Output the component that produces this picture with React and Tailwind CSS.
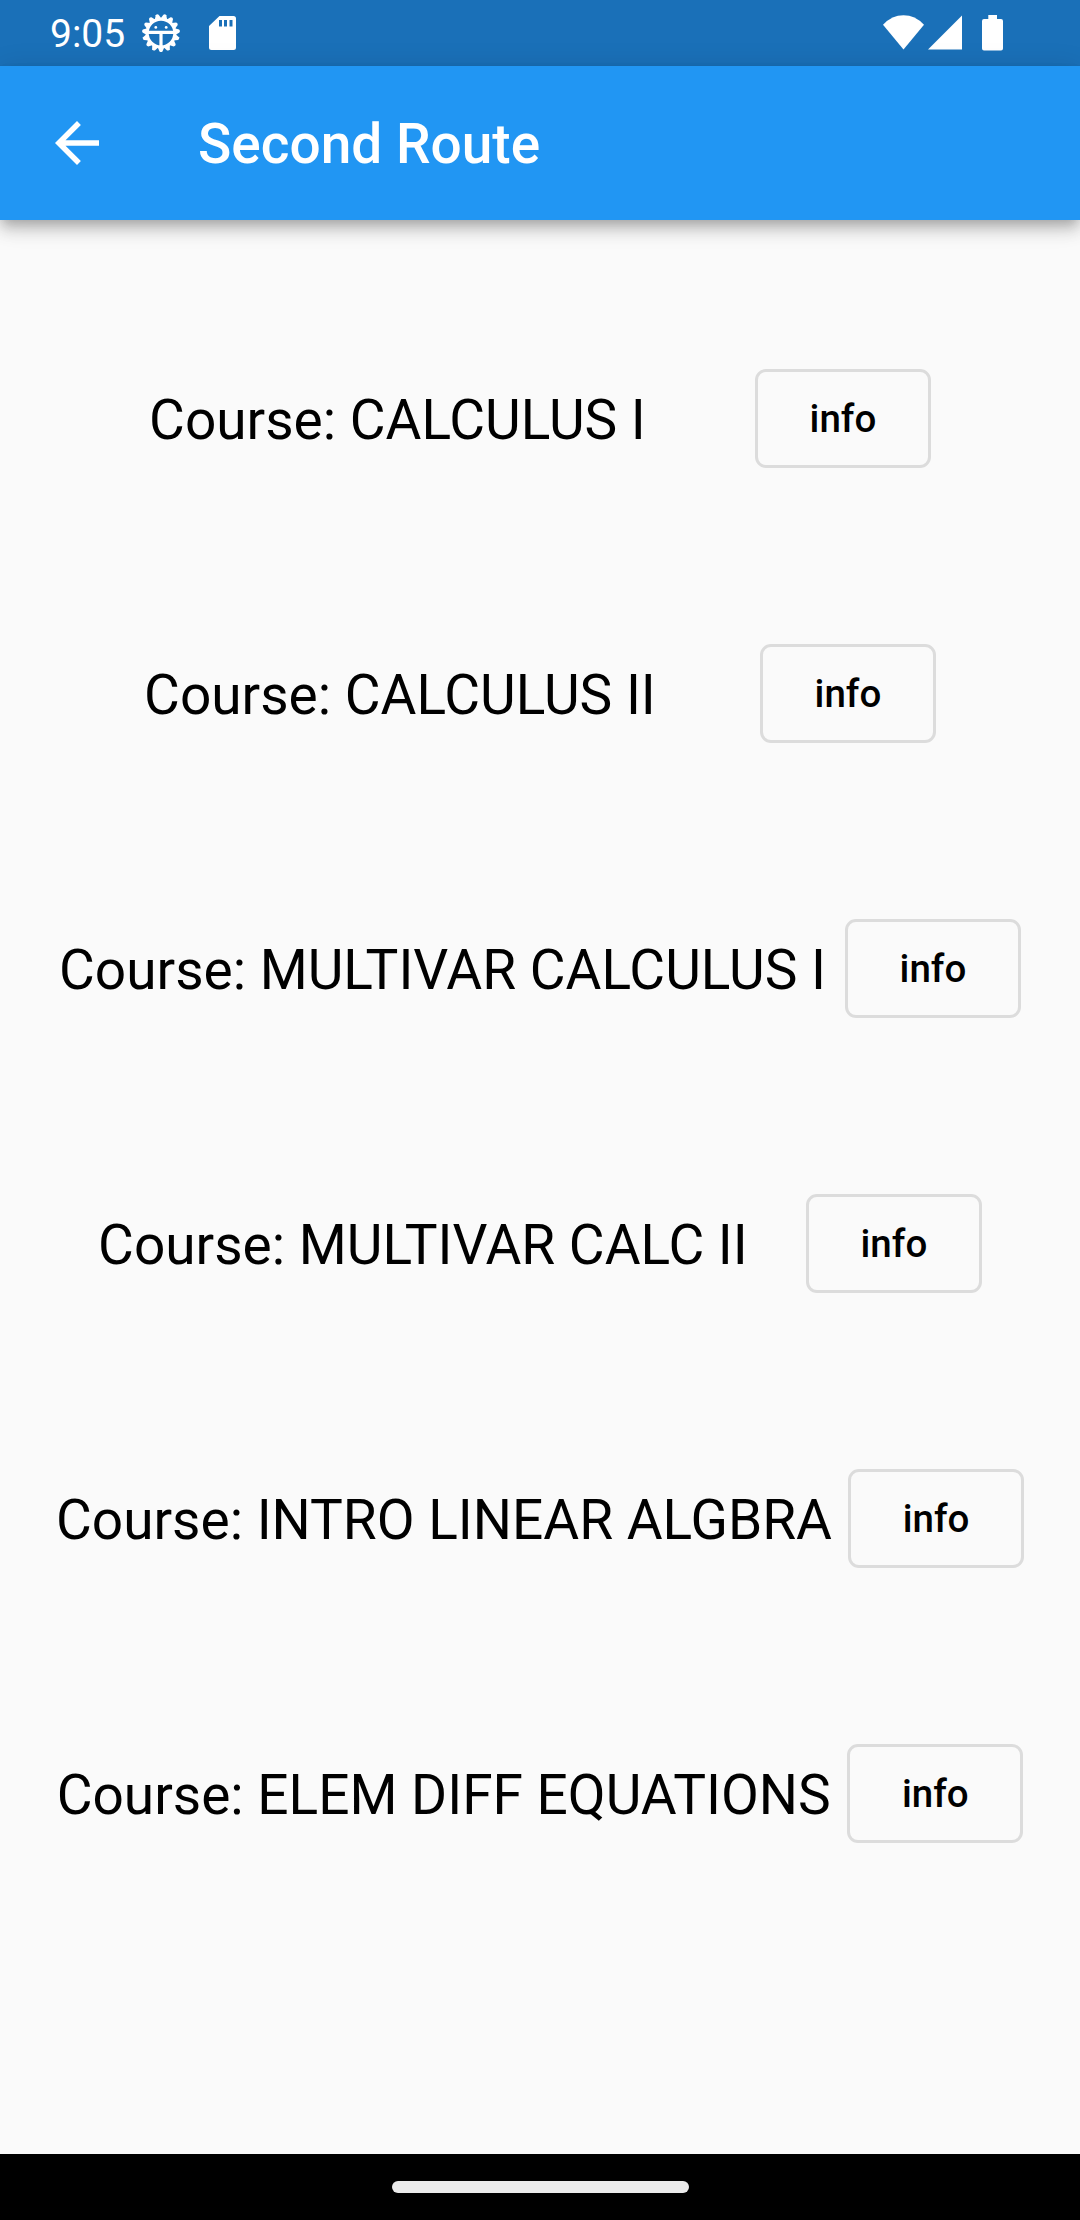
const courses = [
  'CALCULUS I',
  'CALCULUS II',
  'MULTIVAR CALCULUS I',
  'MULTIVAR CALC II',
  'INTRO LINEAR ALGBRA',
  'ELEM DIFF EQUATIONS',
];

const teeth = Array.from({ length: 15 }, (_, i) => i * 24 + 12);

function GearIcon() {
  return (
    <svg className="ml-[16px] h-[40px] w-[40px]" viewBox="-20 -20 40 40" fill="#fff">
      {teeth.map((a) => (
        <path key={a} d="M-3.4 -14L-1.500 -18.400Q0 -19.800 1.500 -18.400L3.400 -14Z" transform={`rotate(${a})`} />
      ))}
      <circle r="13.8" fill="none" stroke="#fff" strokeWidth="3" />
      <path d="M-13 -2.200H13V0.900H1.600V13H-1.600V0.900H-13Z" />
      <circle cx="-5.200" cy="-5.600" r="1.400" />
      <circle cx="5.200" cy="-5.600" r="1.400" />
    </svg>
  );
}

function SdIcon() {
  return (
    <svg className="ml-[28px] h-[36px] w-[28px]" viewBox="0 0 28 36">
      <path
        fill="#fff"
        fillRule="evenodd"
        d="M10.500 1H24.500Q27 1 27 3.500V32.500Q27 35 24.500 35H2.500Q0 35 0 32.500V11ZM10 5V11.500H13V5ZM15 5V11.500H18V5ZM20.500 5V11.500H23.500V5Z"
      />
    </svg>
  );
}

function StatusBar() {
  return (
    <div className="flex h-[66px] items-center bg-[#1a70b8] pr-[76px] pl-[50px] text-white">
      <span className="pt-px text-[39px] leading-[66px]">9:05</span>
      <GearIcon />
      <SdIcon />
      <svg className="ml-auto h-[36px] w-[121px]" viewBox="0 0 121 36" fill="#fff">
        <path d="M0 9.700Q9 0.300 20.500 0.300T41 9.700L20.500 34.500Z" />
        <path d="M45 34.500L79 0.500V34.500Z" />
        <path d="M105.300 0H114V4H118Q120 4 120 6V33.500Q120 35.500 118 35.500H101Q99 35.500 99 33.500V6Q99 4 101 4H105.300Z" />
      </svg>
    </div>
  );
}

export default function App() {
  return (
    <div className="flex h-[2220px] w-[1080px] flex-col overflow-hidden bg-[#fafafa] font-['Roboto',sans-serif] text-black">
      <StatusBar />
      <header className="flex h-[154px] items-center bg-[#2196f3] pl-[44px] text-white shadow-[0_5px_11px_-3px_rgba(0,0,0,0.2),0_11px_14px_0_rgba(0,0,0,0.14),0_3px_27px_0_rgba(0,0,0,0.12)]">
        <svg className="h-[66px] w-[66px]" viewBox="0 0 24 24" fill="#fff">
          <path d="M20 11H7.830l5.590-5.590L12 4l-8 8 8 8 1.410-1.410L7.830 13H20v-2z" />
        </svg>
        <h1 className="ml-[88px] pt-[2px] text-[55px] leading-[64px] font-medium">Second Route</h1>
      </header>
      <main className="flex-1 px-[40px] pt-[61px]">
        {courses.map((name) => (
          <div key={name} className="flex h-[275px] items-center justify-evenly">
            <span className="pt-[2px] text-[55px] leading-[64px] whitespace-nowrap">Course: {name}</span>
            <button className="h-[99px] w-[176px] rounded-[11px] border-3 border-[#dcdcdc] text-[38.5px] leading-[45px] font-medium">
              info
            </button>
          </div>
        ))}
      </main>
      <footer className="flex h-[66px] items-center justify-center bg-black">
        <div className="h-[12px] w-[297px] rounded-[6px] bg-[#ebebeb]" />
      </footer>
    </div>
  );
}
